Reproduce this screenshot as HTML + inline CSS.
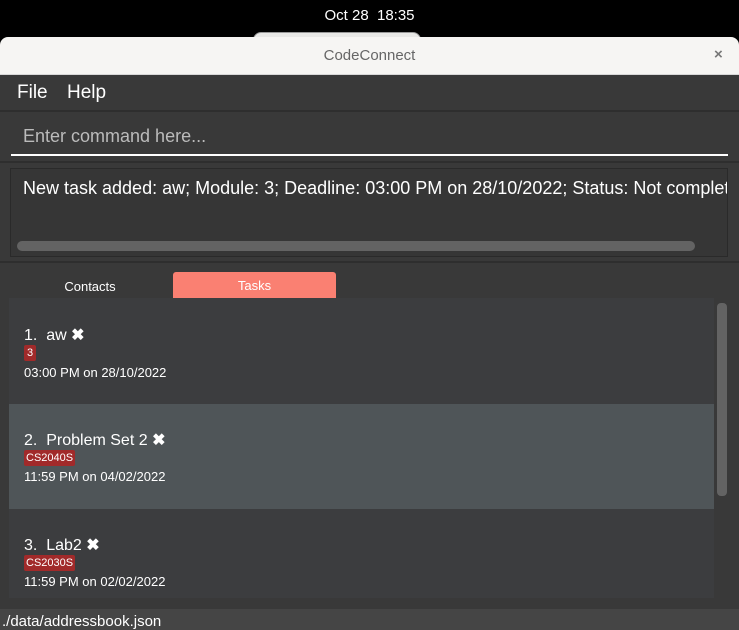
<!DOCTYPE html>
<html><head><style>
*{margin:0;padding:0;box-sizing:border-box}
body{width:739px;height:630px;background:#000;font-family:"Liberation Sans",sans-serif;position:relative;overflow:hidden}
.a{position:absolute}
</style></head><body>
<div class="a" style="left:0;top:0;width:739px;height:33px;background:#000;color:#fff;font-size:15px;text-align:center;line-height:32px">Oct 28&nbsp; 18:35</div>
<div class="a" style="left:253px;top:32px;width:168px;height:12px;background:#e8e8e6;border:1px solid #999;border-radius:8px 8px 0 0"></div>
<div class="a" style="left:0;top:37px;width:739px;height:38px;background:#f6f5f3;border-radius:8px 8px 0 0;border-bottom:1px solid #d8d8d8"></div>
<div class="a" style="left:0;top:47px;width:739px;text-align:center;color:#666;font-size:15px">CodeConnect</div>
<div class="a" style="left:714px;top:46px;color:#777;font-size:15px;font-weight:bold">×</div>
<div class="a" style="left:0;top:75px;width:739px;height:555px;background:#393939"></div>
<div class="a" style="left:17px;top:82px;color:#fff;font-size:19px">File</div>
<div class="a" style="left:67px;top:82px;color:#fff;font-size:19px">Help</div>
<div class="a" style="left:0;top:110px;width:739px;height:2px;background:#2e2e2e"></div>
<div class="a" style="left:23px;top:126px;color:#bbb;font-size:18px">Enter command here...</div>
<div class="a" style="left:11px;top:154px;width:717px;height:2px;background:#fff"></div>
<div class="a" style="left:0;top:161px;width:739px;height:2px;background:#2e2e2e"></div>
<div class="a" style="left:10px;top:168px;width:718px;height:89px;background:#363636;border:1px solid #2a2a2a"></div>
<div class="a" style="left:23px;top:178px;color:#fff;font-size:18px;white-space:nowrap;width:704px;overflow:hidden">New task added: aw; Module: 3; Deadline: 03:00 PM on 28/10/2022; Status: Not completed</div>
<div class="a" style="left:17px;top:241px;width:678px;height:10px;background:#636363;border-radius:5px"></div>
<div class="a" style="left:0;top:261px;width:739px;height:2px;background:#2e2e2e"></div>
<div class="a" style="left:20px;top:279px;width:140px;text-align:center;color:#fff;font-size:13px">Contacts</div>
<div class="a" style="left:173px;top:272px;width:163px;height:26px;background:#fa8072;border-radius:3px 3px 0 0;color:#fff;font-size:13px;text-align:center;line-height:28px">Tasks</div>
<div class="a" style="left:9px;top:298px;width:705px;height:300px;background:#3c3d3f"></div>
<div class="a" style="left:9px;top:404px;width:705px;height:105px;background:#4f5558"></div>
<div class="a" style="left:717px;top:303px;width:10px;height:193px;background:#636363;border-radius:4px"></div>

<div class="a" style="left:24px;top:325px;color:#fff;font-size:16px">1.&nbsp; aw <b>✖</b></div>
<div class="a" style="left:24px;top:345px;background:#a12a2a;color:#fff;font-size:11px;padding:2px 3px;border-radius:2px">3</div>
<div class="a" style="left:24px;top:365px;color:#fff;font-size:13px">03:00 PM on 28/10/2022</div>

<div class="a" style="left:24px;top:430px;color:#fff;font-size:16px">2.&nbsp; Problem Set 2 <b>✖</b></div>
<div class="a" style="left:24px;top:450px;background:#a12a2a;color:#fff;font-size:11px;padding:2px 2px;border-radius:2px">CS2040S</div>
<div class="a" style="left:24px;top:469px;color:#fff;font-size:13px">11:59 PM on 04/02/2022</div>

<div class="a" style="left:24px;top:535px;color:#fff;font-size:16px">3.&nbsp; Lab2 <b>✖</b></div>
<div class="a" style="left:24px;top:555px;background:#a12a2a;color:#fff;font-size:11px;padding:2px 2px;border-radius:2px">CS2030S</div>
<div class="a" style="left:24px;top:574px;color:#fff;font-size:13px">11:59 PM on 02/02/2022</div>

<div class="a" style="left:0;top:609px;width:739px;height:21px;background:#454545"></div>
<div class="a" style="left:2px;top:613px;color:#fff;font-size:15px">./data/addressbook.json</div>
</body></html>
